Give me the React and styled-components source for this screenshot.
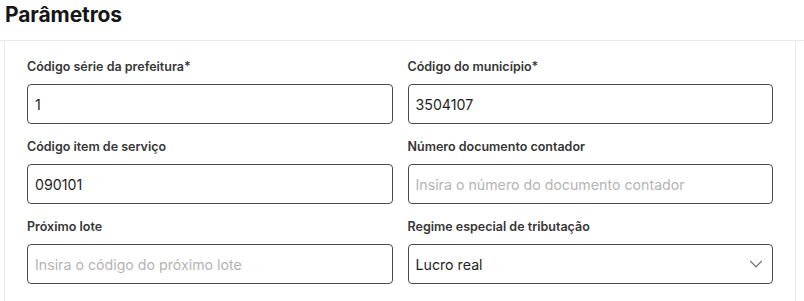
import React from 'react'
import styled, { createGlobalStyle } from 'styled-components'
import { ChevronDown } from 'lucide-react'

const GlobalStyle = createGlobalStyle`
    body {
        margin: 0;
        background: #ffffff;
        font-family: Inter, 'Noto Sans', sans-serif;
    }
`

const Page = styled.div`
    width: 804px;
    height: 301px;
    overflow: hidden;
    background: #fff;
`

const Header = styled.div`
    height: 40px;
    border-bottom: 1px solid #e8e8e8;
    padding: 0 5px;
    display: flex;
    align-items: flex-start;
    h2 {
        margin: 1px 0 0;
        font-size: 21px;
        line-height: 28px;
        font-weight: 700;
        color: #161616;
        letter-spacing: -0.1px;
    }
`

const Panel = styled.div`
    margin: 0 8px 0 4px;
    border-left: 1px solid #e8e8e8;
    border-right: 1px solid #e8e8e8;
    padding: 18px 22px 30px;
    display: grid;
    grid-template-columns: 1fr 1fr;
    column-gap: 15px;
    row-gap: 15px;
`

const Field = styled.div`
    display: flex;
    flex-direction: column;
    label {
        font-size: 12.5px;
        line-height: 16px;
        font-weight: 600;
        color: #363636;
        margin-bottom: 9px;
    }
`

const Box = styled.div`
    height: 40px;
    box-sizing: border-box;
    border: 1px solid #4a4a4a;
    border-radius: 4px;
    display: flex;
    align-items: center;
    justify-content: space-between;
    padding: 0 5px 0 7px;
    font-size: 14.2px;
    color: ${(props) => (props.$placeholder ? '#b4b4b4' : '#1e1e1e')};
    svg {
        color: #6f7a80;
    }
`

const fields = [
    { label: 'Código série da prefeitura*', value: '1' },
    { label: 'Código do município*', value: '3504107' },
    { label: 'Código item de serviço', value: '090101' },
    {
        label: 'Número documento contador',
        placeholder: 'Insira o número do documento contador',
    },
    { label: 'Próximo lote', placeholder: 'Insira o código do próximo lote' },
    { label: 'Regime especial de tributação', value: 'Lucro real', select: true },
]

const App = () => {
    return (
        <Page>
            <GlobalStyle />
            <Header>
                <h2>Parâmetros</h2>
            </Header>
            <Panel>
                {fields.map((f) => (
                    <Field key={f.label}>
                        <label>{f.label}</label>
                        <Box $placeholder={!!f.placeholder}>
                            <span>{f.value || f.placeholder}</span>
                            {f.select && <ChevronDown size={22} strokeWidth={1.3} />}
                        </Box>
                    </Field>
                ))}
            </Panel>
        </Page>
    )
}

export default App
